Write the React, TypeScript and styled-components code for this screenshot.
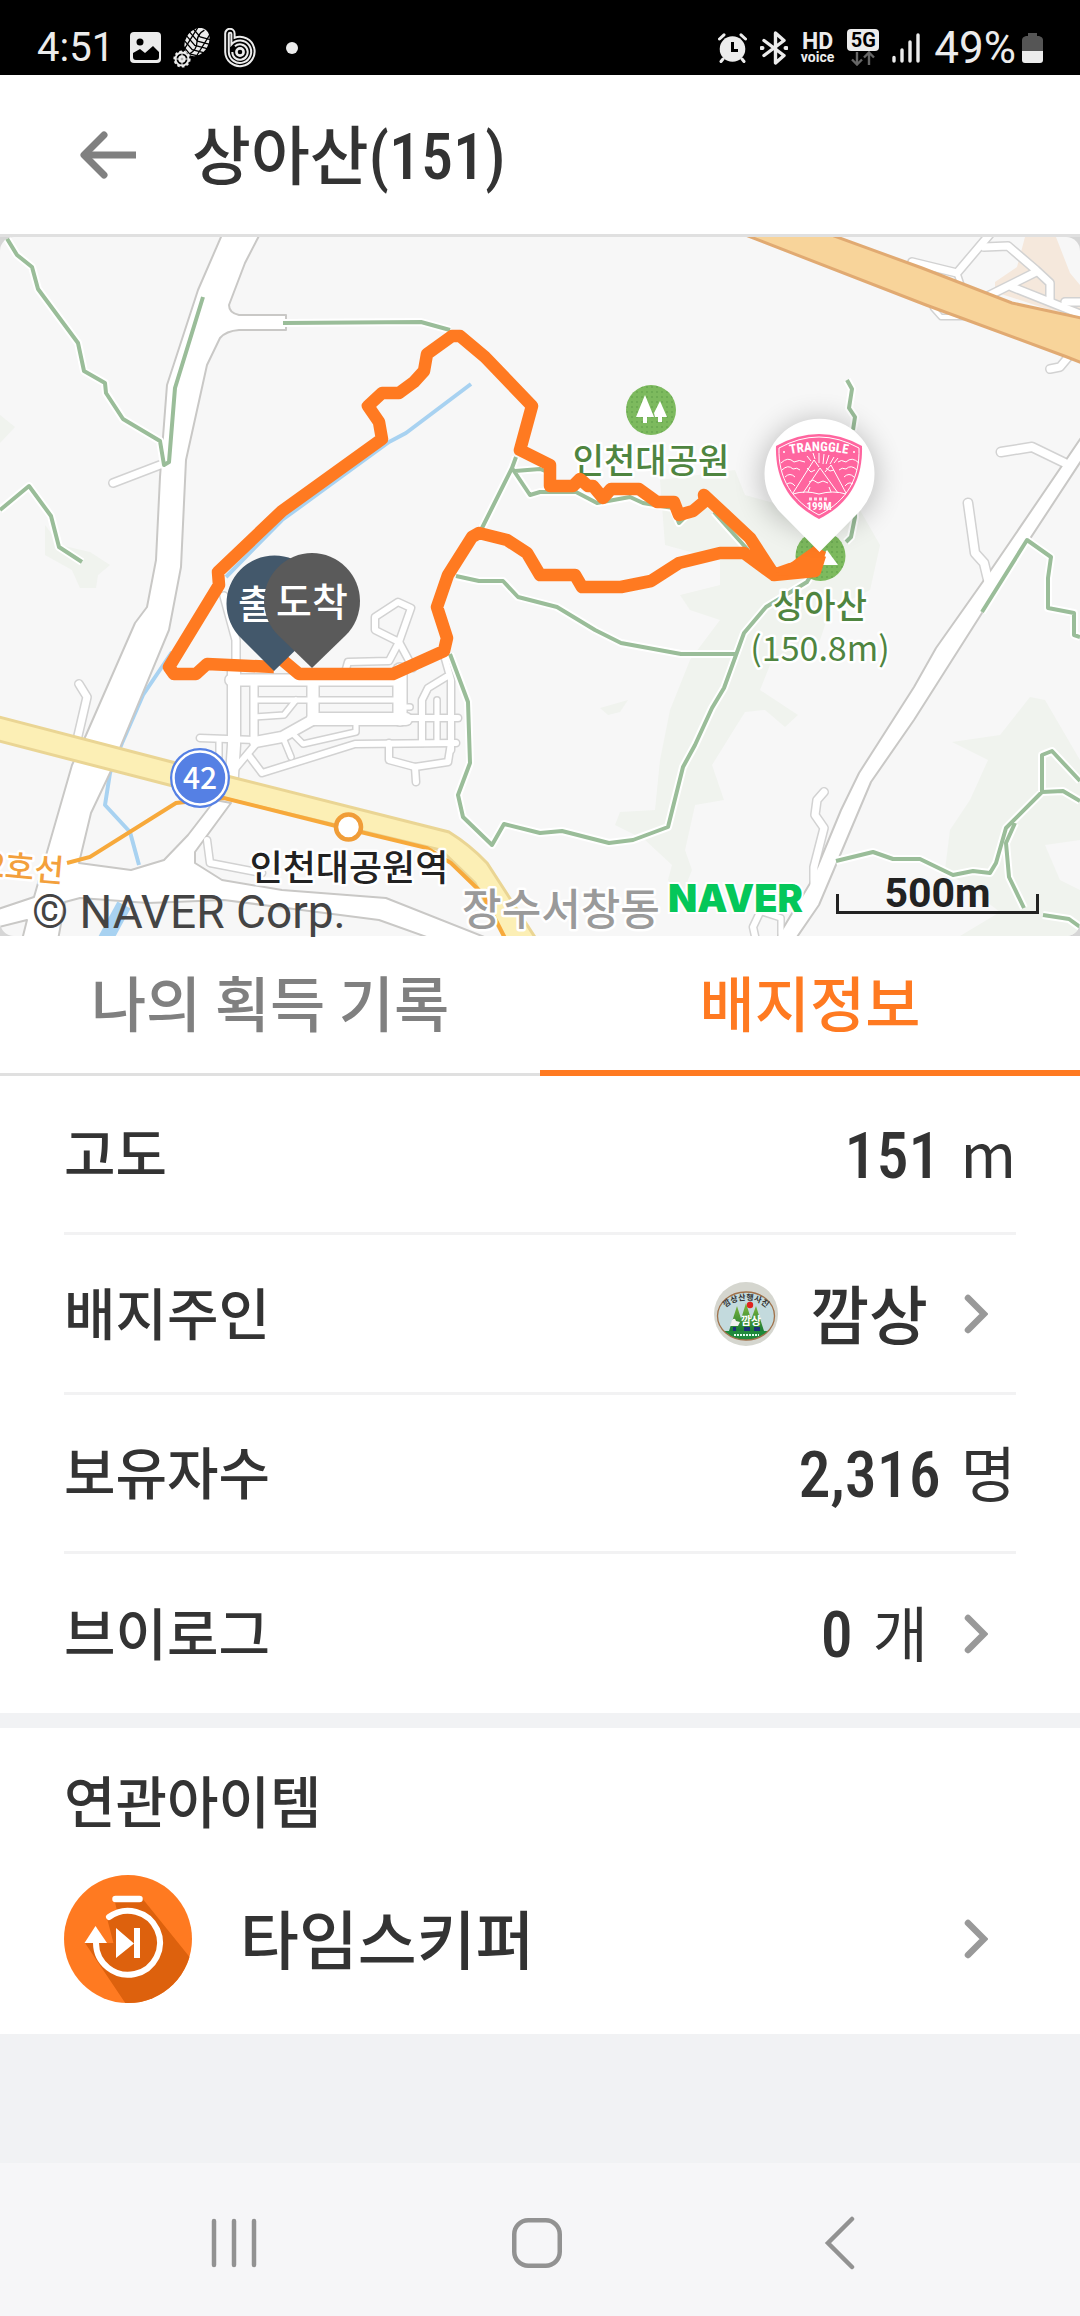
import React from "react";
import styled, { createGlobalStyle, css } from "styled-components";

const INK = "#333333";
const ORANGE = "#ff7a21";

const GlobalStyle = createGlobalStyle`
  *, *::before, *::after { box-sizing: border-box; }
  body { margin: 0; background: #f1f2f4; }
  button { border: 0; padding: 0; margin: 0; background: none; font: inherit; color: inherit; cursor: pointer; }
  svg { display: block; flex: none; }
`;

const Screen = styled.div`
  display: flex;
  flex-direction: column;
  min-height: 100vh;
  color: ${INK};
  font-family: "Noto Sans CJK KR", sans-serif;
`;

/* ---------- status bar ---------- */

const StatusBar = styled.div`
  display: flex;
  justify-content: space-between;
  align-items: center;
  height: 75px;
  padding: 20px 37px 0 37px;
  background: #000;
  color: #ececec;
  font-family: Roboto, sans-serif;
`;

const StatusGroup = styled.div<{ $gap: number }>`
  display: flex;
  align-items: center;
  gap: ${(p) => p.$gap}px;
`;

const StatusText = styled.span`
  padding-right: 4px;
  font-size: 40px;
  line-height: 40px;
`;

const Percent = styled.span`
  display: flex;
  align-items: center;
  gap: 6px;
  padding-left: 1px;
  font-size: 44px;
  line-height: 40px;
`;

const HdVoice = styled.span`
  display: flex;
  flex-direction: column;
  align-items: center;
  font-weight: 700;
`;
const HdTop = styled.span`
  font-size: 23px;
  line-height: 19px;
`;
const HdBottom = styled.span`
  font-size: 14px;
  line-height: 13px;
`;

const Network = styled.span`
  display: flex;
  flex-direction: column;
  align-items: center;
  height: 37px;
`;
const NetworkBox = styled.span`
  width: 32px;
  border-radius: 4px;
  background: #ececec;
  color: #000;
  font-size: 20px;
  font-weight: 700;
  line-height: 22px;
  text-align: center;
`;

/* ---------- header ---------- */

const Header = styled.header`
  display: flex;
  align-items: center;
  gap: 48px;
  height: 162px;
  padding: 0 64px 0 72px;
  background: #fff;
  border-bottom: 3px solid #e0e0e0;
`;

const BackButton = styled.button`
  display: flex;
  align-items: center;
  justify-content: center;
  width: 72px;
  height: 72px;
`;

const Title = styled.h1`
  margin: 0;
  font-size: 64px;
  line-height: 80px;
  font-weight: 500;
`;

const Narrow = styled.span`
  font-family: "Roboto Condensed", Roboto, "Noto Sans CJK KR", sans-serif;
  font-size: 64px;
  line-height: 80px;
  font-weight: 500;
  font-stretch: normal;
`;

/* ---------- map ---------- */

const MapFrame = styled.section`
  position: relative;
  background: #d6d6d6;
`;

const MapSvg = styled.svg`
  width: 100%;
  height: auto;
  border-radius: 14px;
  background: #f7f7f7;
`;

const Copyright = styled.span`
  position: absolute;
  left: 32px;
  bottom: 0;
  color: #444;
  font-family: Roboto, sans-serif;
  font-size: 46px;
  line-height: 48px;
`;

const MapLogo = styled.span`
  position: absolute;
  right: 277px;
  bottom: 20px;
  color: #05c75a;
  font-family: Inter, sans-serif;
  font-size: 38px;
  line-height: 36px;
  font-weight: 900;
  paint-order: stroke;
  -webkit-text-stroke: 4px #fff;
`;

const Scale = styled.span`
  position: absolute;
  right: 41px;
  bottom: 22px;
  width: 203px;
  border: 3px solid #222;
  border-top: 0;
  height: 20px;
  display: flex;
  justify-content: center;
  align-items: flex-end;
  color: #222;
  font-family: Roboto, sans-serif;
  font-size: 41px;
  line-height: 36px;
  font-weight: 700;
`;

/* ---------- tabs ---------- */

const Tabs = styled.div`
  display: grid;
  grid-template-columns: 1fr 1fr;
  height: 140px;
  background: #fff;
`;

const Tab = styled.button<{ $active?: boolean }>`
  display: flex;
  align-items: center;
  justify-content: center;
  padding-bottom: 10px;
  font-size: 60px;
  line-height: 80px;
  font-weight: 500;
  box-shadow: inset 0 -3px #e0e0e0;
  color: #808080;
  ${(p) =>
    p.$active &&
    css`
      color: ${ORANGE};
      box-shadow: inset 0 -6px ${ORANGE};
    `}
`;

/* ---------- lists ---------- */

const Section = styled.section`
  padding: 0 64px;
  background: #fff;
`;

const rowLayout = css`
  display: flex;
  align-items: center;
  justify-content: space-between;
  width: 100%;
  height: 159px;
  text-align: left;
`;

const Row = styled.div`
  ${rowLayout}
  border-bottom: 3px solid #f2f2f3;
`;

const RowButton = styled.button<{ $last?: boolean }>`
  ${rowLayout}
  height: ${(p) => (p.$last ? 159 : 160)}px;
  padding-right: 28px;
  border-bottom: ${(p) => (p.$last ? "0" : "3px solid #f2f2f3")};
`;

const Label = styled.span`
  padding-bottom: 6px;
  font-size: 56px;
  line-height: 80px;
  font-weight: 500;
`;

const Value = styled.span`
  display: flex;
  align-items: baseline;
  gap: 20px;
`;

const Unit = styled.span`
  font-size: 60px;
  line-height: 80px;
  font-weight: 400;
`;

const Trailing = styled.span<{ $gap: number }>`
  display: flex;
  align-items: center;
  gap: ${(p) => p.$gap}px;
`;

const Name = styled.span`
  padding-bottom: 6px;
  font-size: 64px;
  line-height: 80px;
  font-weight: 500;
`;

const Band = styled.div`
  height: 15px;
  background: #f1f2f4;
`;

const SectionTitle = styled.h2`
  margin: 0;
  padding: 31px 0 36px;
  font-size: 56px;
  line-height: 80px;
  font-weight: 500;
`;

const ItemButton = styled.button`
  display: flex;
  align-items: center;
  width: 100%;
  gap: 48px;
  padding: 0 28px 31px 0;
  text-align: left;
`;

const ItemName = styled(Name)`
  flex: 1;
`;

/* ---------- system navigation ---------- */

const Filler = styled.div`
  flex: 1;
`;

const NavBar = styled.nav`
  display: flex;
  justify-content: space-between;
  align-items: center;
  height: 153px;
  padding: 6px 190px 0 184px;
  background: #f6f6f8;
`;

const NavButton = styled.button`
  display: flex;
  align-items: center;
  justify-content: center;
  width: 100px;
  height: 100px;
`;

/* ---------- icons ---------- */

const PictureIcon = () => (
  <svg width="31" height="31" viewBox="0 0 31 31" aria-hidden="true">
    <rect width="31" height="31" rx="4" fill="#ececec" />
    <circle cx="10" cy="10" r="3.5" fill="#000" />
    <path d="M3 21 10 17l5 4 8-7 6 6v5a3 3 0 0 1-3 3H6a3 3 0 0 1-3-3z" fill="#000" />
  </svg>
);

const ShoeIcon = () => (
  <svg width="39" height="40" viewBox="0 0 39 40" fill="none" stroke="#ececec" aria-hidden="true">
    <g transform="rotate(32 24 14)">
      <ellipse cx="24" cy="14" rx="11.500" ry="15" fill="#ececec" stroke="none" />
      <path d="M24 0q-4 7 0 14t0 14M17 1v26M31 1v26" stroke="#000" strokeWidth="1.300" />
      <path d="M11 4l13 4 13-4M11 9l13 4 13-4M11 14l13 4 13-4M11 19l13 4 13-4M12 24l12 4 12-4" stroke="#000" strokeWidth="1.300" />
    </g>
    <circle cx="9" cy="31" r="6.500" strokeWidth="2" />
    <circle cx="9" cy="31" r="7.600" strokeWidth="2" strokeDasharray="2.6 2.1" />
    <circle cx="9" cy="31" r="2.500" strokeWidth="2.400" />
    <path d="M9 25v12M3 31h12" strokeWidth="1" />
  </svg>
);

const BandIcon = () => (
  <svg width="32" height="40" viewBox="0 0 32 40" fill="none" stroke="#ececec" strokeWidth="2" aria-hidden="true">
    <path d="M1.200 24V5.500a4.700 4.700 0 0 1 9.400 0V9.800A14.700 14.700 0 1 1 1.200 24z" />
    <path d="M4.800 24V6a1.300 1.300 0 0 1 2.600 0V16.500A11.200 11.200 0 1 1 4.800 24z" />
    <path d="M8.300 24a7.700 7.700 0 1 0 2.600-5.700" />
    <circle cx="16" cy="24" r="3.600" strokeWidth="2.600" />
  </svg>
);

const DotIcon = () => (
  <svg width="12" height="12" viewBox="0 0 12 12" aria-hidden="true">
    <circle cx="6" cy="6" r="6" fill="#ececec" />
  </svg>
);

const AlarmIcon = () => (
  <svg width="29" height="30" viewBox="0 0 29 30" fill="none" stroke="#ececec" strokeLinecap="round" aria-hidden="true">
    <circle cx="14.500" cy="16" r="12.800" fill="#ececec" stroke="none" />
    <path d="M1.500 6 6 1.800M27.500 6 23 1.800" strokeWidth="3" />
    <path d="M5 26l-2 2.500M24 26l2 2.500" strokeWidth="3" />
    <path d="M14.500 9v8.500h5.500" stroke="#000" strokeWidth="3" strokeLinecap="butt" />
  </svg>
);

const BluetoothIcon = () => (
  <svg width="28" height="34" viewBox="0 0 28 34" fill="none" stroke="#ececec" strokeWidth="3.400" strokeLinejoin="round" strokeLinecap="round" aria-hidden="true">
    <path d="M4 9.500 24 24.500l-8.500 7.500V2L24 9.500 4 24.500" />
    <path d="M1.500 17h1M25.500 17h1" strokeWidth="4" />
  </svg>
);

const DataArrows = () => (
  <svg width="24" height="15" viewBox="0 0 24 15" fill="none" stroke="#666" strokeWidth="2.400" aria-hidden="true">
    <path d="M6 1v12M1 8.500l5 5 5-5M18 14V2M13 6.500l5-5 5 5" />
  </svg>
);

const SignalIcon = () => (
  <svg width="28" height="30" viewBox="0 0 28 30" stroke="#ececec" strokeWidth="3.400" strokeLinecap="round" aria-hidden="true">
    <path d="M2 24.500V28M10 17v11M18 9v19M26 2v26" />
  </svg>
);

const BatteryIcon = () => (
  <svg width="21" height="30" viewBox="0 0 21 30" aria-hidden="true">
    <path d="M6 0h9v3h2q4 1 4 4v11H0V7q0-3 4-4h2z" fill="#555" />
    <path d="M0 18h21v9q0 3-3 3H3q-3 0-3-3z" fill="#ececec" />
  </svg>
);

const ArrowIcon = () => (
  <svg width="58" height="48" viewBox="0 0 58 48" fill="none" stroke="#808080" strokeWidth="7" aria-hidden="true">
    <path d="M5 24h52" />
    <path d="M25 4 5 24l20 20" strokeLinecap="round" strokeLinejoin="round" />
  </svg>
);

const Chevron = () => (
  <svg width="24" height="42" viewBox="0 0 24 42" fill="none" stroke="#999" strokeWidth="6.500" strokeLinecap="round" aria-hidden="true">
    <path d="M4 5l16 16L4 37" />
  </svg>
);

const Avatar = () => (
  <svg width="64" height="64" viewBox="0 0 64 64" aria-hidden="true">
    <defs>
      <linearGradient id="tree" x1="0" y1="0" x2="0" y2="1">
        <stop offset="0" stopColor="#86b93a" />
        <stop offset="1" stopColor="#157a35" />
      </linearGradient>
      <clipPath id="medal">
        <ellipse cx="32" cy="34" rx="28.500" ry="24" />
      </clipPath>
      <path id="arc" d="M8 34C11 13 53 13 56 34" />
    </defs>
    <circle cx="32" cy="32" r="32" fill="#d5d6cf" />
    <ellipse cx="32" cy="34" rx="28.500" ry="24" fill="#c3dadd" />
    <g clipPath="url(#medal)">
      <path d="M23 24l8 25H15zM32 21l9 29H23zM42 24l8 25H33z" fill="url(#tree)" />
      <path d="M0 49h64v16H0z" fill="#1f8a3b" />
      <path d="M18 38q3-3 4 1l4 1-2 4h-8z" fill="#f3f3ee" />
      <path d="M19 45h3v4h-3zM30 45h6v4h-6zM40 45h6v4h-6z" fill="#1b2f7c" />
      <path d="M20 53h25" stroke="#dfe" strokeWidth="2" strokeDasharray="2 1" />
    </g>
    <circle cx="36" cy="23" r="3.200" fill="#e0231d" />
    <ellipse cx="32" cy="34" rx="28.500" ry="24" fill="none" stroke="#a0714a" strokeWidth="1.300" />
    <text fontSize="8" fontWeight="700" fill="#333">
      <textPath href="#arc" startOffset="50%" textAnchor="middle">깜상산행사진</textPath>
    </text>
    <text x="37" y="43" fontSize="11" fontWeight="700" fill="#fff" textAnchor="middle">깜상</text>
  </svg>
);

const TimeSkipperIcon = () => (
  <svg width="128" height="128" viewBox="0 0 128 128" aria-hidden="true">
    <defs>
      <clipPath id="disc">
        <circle cx="64" cy="64" r="64" />
      </clipPath>
    </defs>
    <g clipPath="url(#disc)">
      <rect width="128" height="128" fill="#ff7a21" />
      <path d="M51 27l27-4 54 67v60H76L21 68h31v10L43 43l10-7z" fill="#dd610d" />
    </g>
    <path d="M51.500 24h24" stroke="#fff" strokeWidth="6.500" strokeLinecap="round" />
    <path d="M45 42A32 32 0 1 1 32 68" fill="none" stroke="#fff" strokeWidth="6" strokeLinecap="round" />
    <path d="M31.500 51 43 68H20.500z" fill="#fff" />
    <path d="M52 53l18 15.500V53h6v30h-6V68.500L52 83z" fill="#fff" />
  </svg>
);

const RecentsIcon = () => (
  <svg width="50" height="52" viewBox="0 0 50 52" stroke="#929292" strokeWidth="4.500" strokeLinecap="round" aria-hidden="true">
    <path d="M5 4v44M25 4v44M45 4v44" />
  </svg>
);
const HomeIcon = () => (
  <svg width="52" height="52" viewBox="0 0 52 52" fill="none" stroke="#929292" strokeWidth="4.500" aria-hidden="true">
    <rect x="3.250" y="3.250" width="45.500" height="45.500" rx="14" />
  </svg>
);
const NavBackIcon = () => (
  <svg width="34" height="54" viewBox="0 0 34 54" fill="none" stroke="#929292" strokeWidth="4.500" strokeLinecap="round" aria-hidden="true">
    <path d="M29 3 5 27l24 24" />
  </svg>
);

/* ---------- map artwork ---------- */

type Street = [string, number];

const STREETS: Street[] = [
  ["M113 483 160 465", 7],
  ["M79 684 87 697 77 740", 7],
  ["M224 596 236 640V690L231 785", 7],
  ["M231 680H400", 11],
  ["M234 670V745L231 790", 12],
  ["M254 683V740", 7],
  ["M254 700H400", 5],
  ["M254 717 284 715 296 700", 5],
  ["M313 683V718", 11],
  ["M313 719H406", 12],
  ["M400 670V719", 13],
  ["M316 718 282 737 255 742", 10],
  ["M200 738 255 740", 6],
  ["M219 742V766", 5],
  ["M294 735 303 744 356 732V720", 5],
  ["M284 740 291 757", 5],
  ["M255 745 234 770", 6],
  ["M250 757 262 773 355 744 456 743", 6],
  ["M389 743V760L415 767 448 762 451 743", 6],
  ["M415 767 416 782", 6],
  ["M400 718H458", 6],
  ["M400 707H410", 5],
  ["M422 743V700L428 688 446 677", 6],
  ["M437 743V700", 5],
  ["M444 655 451 680V750", 6],
  ["M398 602 411 608 399 642 375 630V617Z", 6],
  ["M399 642 389 661 348 662 344 676", 6],
  ["M399 642 413 668", 6],
  ["M207 840 210 863 262 873", 6],
  ["M1001 452 1032 447 1065 463", 8],
  ["M968 503 975 553 984 563 990 588", 8],
  ["M824 792 817 800 815 815 824 828 814 867V890", 7],
  ["M762 908 753 927 757 945", 6],
  ["M762 912 781 918V945", 5],
  ["M990 234 957 273 912 262", 7],
  ["M957 273 961 285", 5],
  ["M984 247 1008 246 1036 270 1050 283V300", 7],
  ["M1036 272 988 296", 7],
  ["M1012 287 1080 314", 7],
  ["M1065 302H1085", 7],
  ["M933 304V308L941 317H966", 4],
  ["M1050 369 1060 367 1070 355", 7],
];

const TRAILS = [
  "M6 237 17 255 32 267 38 289 78 343 84 371 105 383 106 393 123 419 160 441 164 465 169 462 175 388 203 297",
  "M0 510 29 486 51 516 59 547 82 562",
  "M283 323 421 322 450 330",
  "M516 457 512 468 482 528",
  "M515 471 540 469 553 474",
  "M512 468 530 495 540 492H576L597 503 630 497 643 503 673 508 679 523 690 512",
  "M714 512 748 550",
  "M847 380 852 389 849 408 855 417 853 430",
  "M855 505V517L851 537 846 542",
  "M820 560 807 582 766 607 744 633 736 655 724 688 712 708 695 745 683 767 668 827 633 840 609 843 562 831 540 833 504 824 492 845 463 817 458 795 470 763 468 702 450 654",
  "M456 576 479 581H503L518 597 557 607 595 630 621 643 681 654H736",
  "M982 612 1027 540 1051 557 1048 578V608L1074 613V635L1080 637",
  "M836 861 873 852 893 859H920L953 875 973 871 990 873 996 863 1006 828 1042 792V755L1052 751 1080 781",
  "M1042 792 1063 791 1080 801",
  "M1015 823 1006 843 1009 877 1024 908",
  "M1043 915 1069 919 1080 927",
];

const ROUTE =
  "M274 667 207 664 196 674H174L169 667 219 585 218 572 282 511 382 439 379 422 368 406 382 393H399L414 382 424 371 427 354 452 336H460L485 357 532 406 520 450 550 465V486H573L580 479 588 486H593L603 498 611 489H639L657 502H674L679 515 693 511 705 501 704 495 750 538 774 575 815 571 820 555 M818 562 791 569 774 575 744 553H720L679 563 651 581 621 587H582L575 575H540L527 553 507 540 479 533 472 537 448 575 437 607 447 638 444 651 393 674H299L280 658";

const CONDENSED = "Roboto Condensed, Roboto, sans-serif";

const Shield = () => (
  <g>
    <path d="M776 446Q819 422 862 446C863 480 849 504 819 519C790 504 775 480 776 446Z" fill="#ff659f" />
    <path d="M779 448Q819 426 859 448C860 478 847 501 819 515C792 501 778 478 779 448Z" fill="none" stroke="#fff" strokeWidth="1" />
    <g fill="none" stroke="#fff" strokeWidth="1">
      <path d="M793 493 814 460 819 467M803 493 820 468 838 493M825 472 831 465 846 493M807 468l4 4 4-2M826 468l4 3 4-1" />
      <path d="M793 494q12-4 26 0 14-4 27 0M809 482l4-2 5 3 5-2 5 2M810 487l-2 5M829 487l2 5" />
      <path d="M781 463q7-7 13-1 5-3 11 0M782 470q6-6 11-1 4-2 7 1M785 477q5-5 10 0M859 463q-7-7-13-1-5-3-8 0M857 470q-6-6-11-1-4-2-7 1M854 477q-5-5-10 0M787 484q4-3 8 2M853 484q-4-3-8 2" />
      <path d="M819 453v10M824 454l-1 10M829 455l-3 9M834 457l-4 7M813 453l2 6M807 456l4 5M838 458l-4 5" />
    </g>
    <path id="crest" d="M786 455Q819 447 852 455" fill="none" />
    <text fill="#fff" fontSize="13" fontWeight="700" fontFamily={CONDENSED}>
      <textPath href="#crest" startOffset="50%" textAnchor="middle">TRANGGLE</textPath>
    </text>
    <circle cx="784" cy="452" r="1" fill="#fff" />
    <circle cx="854" cy="452" r="1" fill="#fff" />
    <text x="819" y="510" fill="#fff" fontSize="11" fontWeight="700" textAnchor="middle" fontFamily={CONDENSED}>199M</text>
    <path d="M809 499h20" stroke="#fff" strokeWidth="3" strokeDasharray="3 2" opacity="0.800" />
  </g>
);

const halo = { stroke: "#fff", strokeWidth: 5, strokeLinejoin: "round" as const, paintOrder: "stroke" as const };

const TrailMap = () => (
  <MapSvg viewBox="0 237 1080 699" role="img" aria-label="상아산 코스 지도" fontFamily="Noto Sans CJK KR, sans-serif">
    <defs>
      <filter id="soft" x="-50%" y="-50%" width="200%" height="200%">
        <feGaussianBlur stdDeviation="14" />
      </filter>
      <pattern id="dots" width="5" height="5" patternUnits="userSpaceOnUse">
        <circle cx="2" cy="2" r="0.800" fill="#5a9a46" />
      </pattern>
    </defs>

    <g fill="#f0f3ee">
      <path d="M0 415 15 427 0 443zM45 525 60 545 90 552 110 565 98 575 96 588H80L72 570 45 555z" />
      <path d="M660 480 735 470 745 495 800 510 860 510 880 545 870 590 830 610 820 640 770 665 760 690 798 715 785 727 765 710 745 712 712 765 724 800 695 805 685 850 692 870 680 900 668 880 672 865 645 840 615 825 620 812 655 810 660 760 670 710 690 660 720 620 690 610 680 595 720 585 720 560 665 545z" />
      <path d="M600 708 628 700 620 712 608 715zM952 742 1000 735 1030 697 1045 700 1080 760V840L1045 845 1060 880 1080 890V936H960L1000 912 945 870 950 830 970 800 988 760z" />
    </g>
    <path d="M1025 237H1056L1070 273 1080 285V318L1050 310 995 292V282L1017 267z" fill="#f5e8dc" />

    <g fill="none" stroke="#a8d2f1" strokeLinejoin="round">
      <path d="M471 384 406 433 389 442 341 477 282 520 226 577" strokeWidth="4" />
      <path d="M172 652 143 695 122 743 110 773 105 805 130 832 139 865" strokeWidth="4" />
    </g>

    <g fill="none" stroke="#d2d2d2" strokeLinejoin="round" strokeLinecap="round">
      {STREETS.map(([d, w]) => (
        <path key={d} d={d} strokeWidth={w + 3} />
      ))}
    </g>
    <g fill="#fff" stroke="#c9c8c6" strokeWidth="2" strokeLinejoin="round">
      <path d="M224 230 198 290 167 385 163 437 160 477 156 560 147 607 135 623 86 735 72 765 34 897 -5 910V928L27 920 22 940H58L65 902 80 898 148 903 224 900 286 908 379 920 435 940H492L386 898 282 890 222 880 195 863V852L231 803 215 800 188 835 164 860 131 870 79 863 91 813 110 773 122 743 169 630 181 567 186 460 207 365 220 338Q226 331 239 330H286V315H239Q229 313 229 305L245 263 262 230Z" />
      <path d="M1085 432 984 580 936 648 914 687 859 773 841 810 812 880 776 940H795L819 905 871 782 914 720 1003 580 1085 455Z" />
    </g>
    <g fill="none" stroke="#fff" strokeLinejoin="round" strokeLinecap="round">
      {STREETS.map(([d, w]) => (
        <path key={d} d={d} strokeWidth={w} />
      ))}
    </g>
    <path d="M124 905 105 940" stroke="#a8d2f1" strokeWidth="15" />

    <path d="M730 229 926 305 1067 357 1090 366V320L1012 303 922 268 815 229Z" fill="#f8d49a" stroke="#e1aa72" strokeWidth="3" />
    <path d="M-5 716 172 762 231 777 449 832Q470 845 487 863L540 945H508L475 883 441 850 224 798 169 785 -5 740Z" fill="#fcefb5" stroke="#ead594" strokeWidth="3" />
    <path d="M67 863 90 857 176 803 224 798 344 828 427 848 451 863 482 893 506 940" fill="none" stroke="#f7a93b" strokeWidth="4" />

    <g fill="none" strokeLinejoin="round">
      <path d={TRAILS.join("")} stroke="#fff" strokeWidth="8" />
      <path d={TRAILS.join("")} stroke="#9abd99" strokeWidth="4" />
    </g>

    <circle cx="348.500" cy="827" r="12.500" fill="#fff" stroke="#f09d38" strokeWidth="4.500" />
    <circle cx="200" cy="778" r="30" fill="#5580e4" />
    <circle cx="200" cy="778" r="26.500" fill="none" stroke="#fff" strokeWidth="2.500" />
    <text x="200" y="789" fontSize="30" fontWeight="500" fill="#fff" textAnchor="middle">42</text>

    <circle cx="651" cy="410" r="25" fill="#7dba5e" />
    <circle cx="651" cy="410" r="25" fill="url(#dots)" />
    <path d="M645 395 654 417H647V423H643V417H636zM660 401 667 417H662V422H658V417H655L654 413z" fill="#fff" />
    <circle cx="820.500" cy="556" r="25" fill="#7dba5e" />
    <circle cx="820.500" cy="556" r="25" fill="url(#dots)" />
    <path d="M815 565 827 550 838 565z" fill="#fff" />

    <g fontSize="34" fill="#4f8540" textAnchor="middle" fontWeight="500" {...halo}>
      <text x="651" y="473">인천대공원</text>
      <text x="820" y="618">상아산</text>
      <text x="820" y="661" fontWeight="400">(150.8m)</text>
    </g>
    <text x="349" y="881" fontSize="36" fontWeight="500" fill="#222" textAnchor="middle" {...halo}>인천대공원역</text>
    <text x="-14" y="877" fontSize="32" fontWeight="500" fill="#f3a03c" transform="rotate(5 0 875)" {...halo}>2호선</text>
    <text x="561" y="925" fontSize="43" fontWeight="500" fill="#9a9a9a" textAnchor="middle" {...halo}>장수서창동</text>

    <path d={ROUTE} fill="none" stroke={ORANGE} strokeWidth="12.500" strokeLinejoin="round" />
    <path d="M774 575 800 556 814 546 826 552 818 576z" fill={ORANGE} />

    <path d="M274 671 241 638A48 48 0 1 1 308 638Z" fill="#43586b" />
    <text x="274" y="618" fontSize="39" fontWeight="500" fill="#fff" textAnchor="middle">출발</text>
    <path d="M312 668 278 635A48 48 0 1 1 346 635Z" fill="#5a5a5a" />
    <text x="312" y="616" fontSize="39" fontWeight="500" fill="#fff" textAnchor="middle">도착</text>

    <path d="M819 535 775 515A58 58 0 1 1 863 515Z" fill="#000" opacity="0.220" filter="url(#soft)" />
    <path d="M819.500 552 780 512A55 55 0 1 1 859 512Z" fill="#fff" />
    <Shield />
  </MapSvg>
);

export default function App() {
  return (
    <>
      <GlobalStyle />
      <Screen>
        <StatusBar>
          <StatusGroup $gap={30}>
            <StatusGroup $gap={12}>
              <StatusText>4:51</StatusText>
              <PictureIcon />
              <ShoeIcon />
              <BandIcon />
            </StatusGroup>
            <DotIcon />
          </StatusGroup>
          <StatusGroup $gap={13}>
            <AlarmIcon />
            <BluetoothIcon />
            <HdVoice>
              <HdTop>HD</HdTop>
              <HdBottom>voice</HdBottom>
            </HdVoice>
            <Network>
              <NetworkBox>5G</NetworkBox>
              <DataArrows />
            </Network>
            <SignalIcon />
            <Percent>
              49%
              <BatteryIcon />
            </Percent>
          </StatusGroup>
        </StatusBar>

        <Header>
          <BackButton aria-label="뒤로">
            <ArrowIcon />
          </BackButton>
          <Title>
            상아산<Narrow>(151)</Narrow>
          </Title>
        </Header>

        <MapFrame>
          <TrailMap />
          <Copyright>© NAVER Corp.</Copyright>
          <MapLogo>NAVER</MapLogo>
          <Scale>500m</Scale>
        </MapFrame>

        <Tabs role="tablist">
          <Tab role="tab" aria-selected="false">나의 획득 기록</Tab>
          <Tab role="tab" aria-selected="true" $active>배지정보</Tab>
        </Tabs>

        <Section>
          <Row>
            <Label>고도</Label>
            <Value>
              <Narrow>151</Narrow>
              <Unit>m</Unit>
            </Value>
          </Row>
          <RowButton>
            <Label>배지주인</Label>
            <Trailing $gap={36}>
              <Trailing $gap={32}>
                <Avatar />
                <Name>깜상</Name>
              </Trailing>
              <Chevron />
            </Trailing>
          </RowButton>
          <Row>
            <Label>보유자수</Label>
            <Value>
              <Narrow>2,316</Narrow>
              <Unit>명</Unit>
            </Value>
          </Row>
          <RowButton $last>
            <Label>브이로그</Label>
            <Trailing $gap={36}>
              <Value>
                <Narrow>0</Narrow>
                <Unit>개</Unit>
              </Value>
              <Chevron />
            </Trailing>
          </RowButton>
        </Section>

        <Band />

        <Section>
          <SectionTitle>연관아이템</SectionTitle>
          <ItemButton>
            <TimeSkipperIcon />
            <ItemName>타임스키퍼</ItemName>
            <Chevron />
          </ItemButton>
        </Section>

        <Filler />

        <NavBar aria-label="시스템 탐색">
          <NavButton aria-label="최근 앱">
            <RecentsIcon />
          </NavButton>
          <NavButton aria-label="홈">
            <HomeIcon />
          </NavButton>
          <NavButton aria-label="뒤로 가기">
            <NavBackIcon />
          </NavButton>
        </NavBar>
      </Screen>
    </>
  );
}
